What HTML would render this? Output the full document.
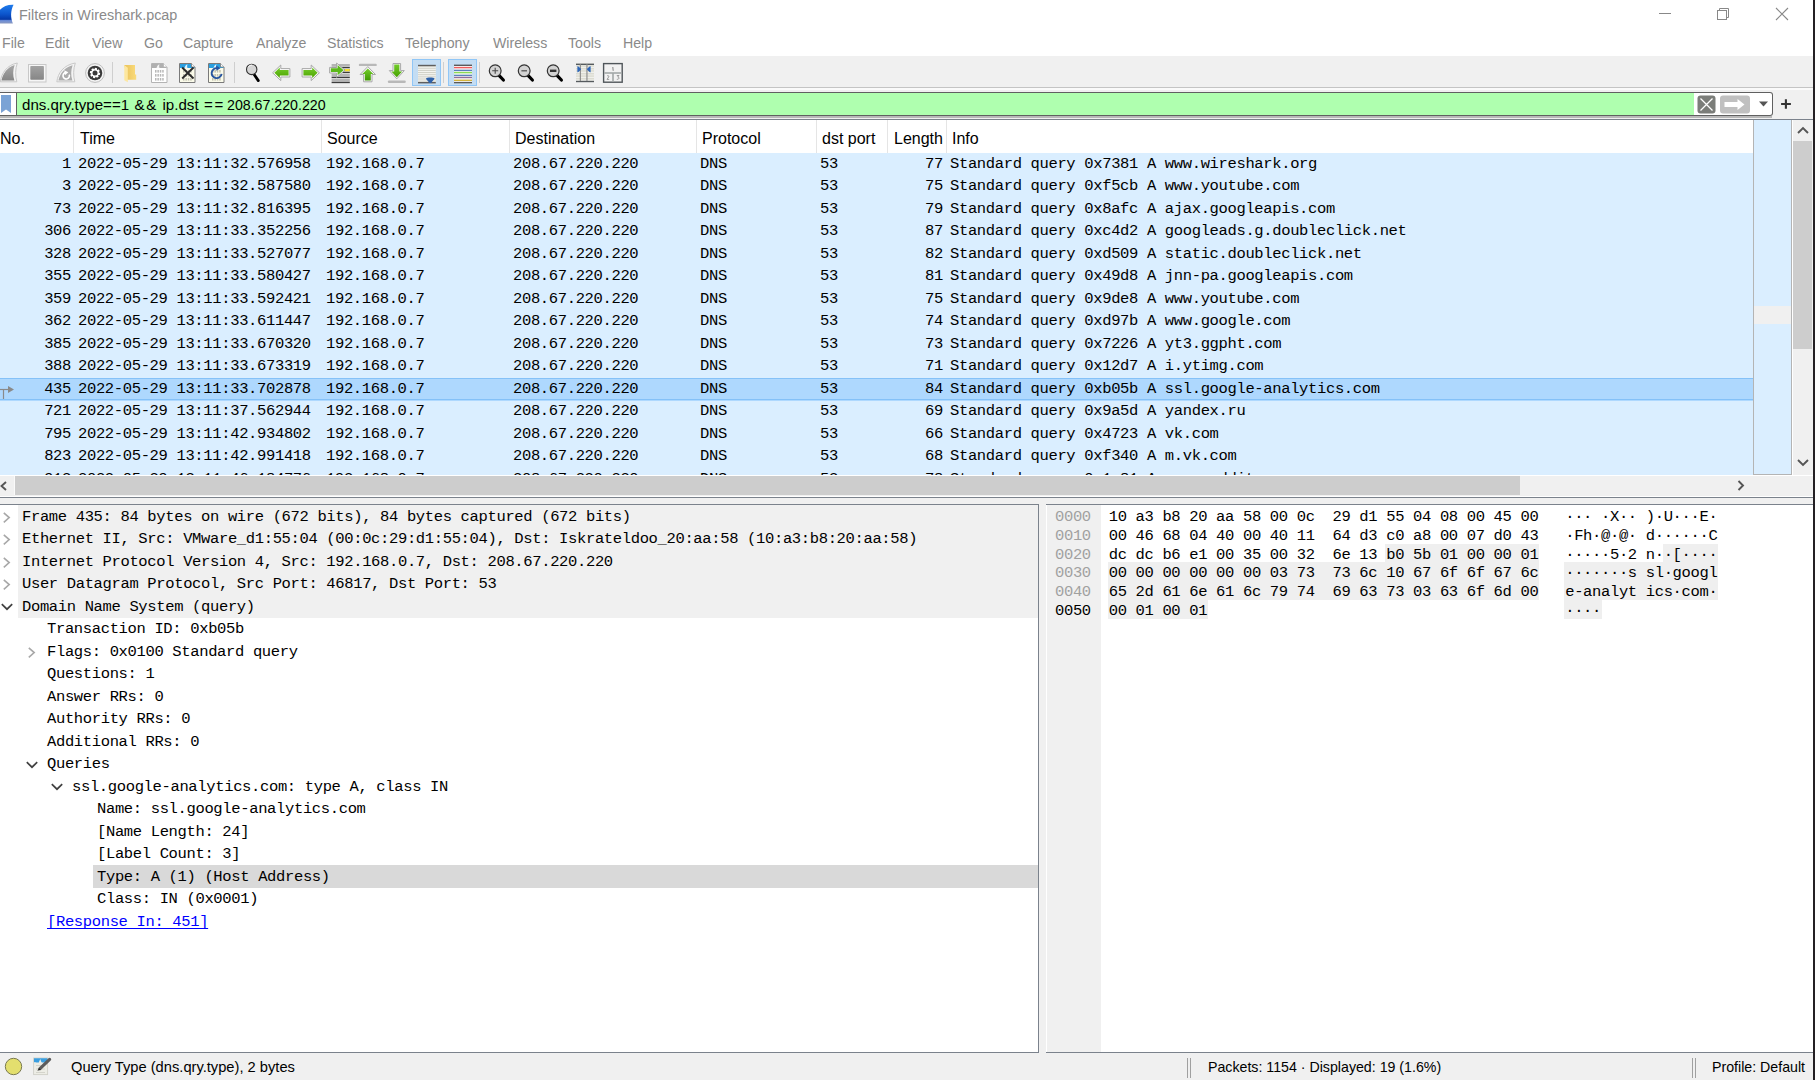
<!DOCTYPE html><html><head><meta charset="utf-8"><style>
*{margin:0;padding:0;box-sizing:border-box}
html,body{width:1815px;height:1080px;overflow:hidden;background:#fff;position:relative;font-family:"Liberation Sans",sans-serif}
.a{position:absolute}
.m{font-family:"Liberation Mono",monospace;font-size:15.5px;letter-spacing:-0.35px;white-space:pre;color:#000;line-height:18px}
.s{font-family:"Liberation Sans",sans-serif;white-space:pre}
</style></head><body>
<div class="a s" style="left:19px;top:6px;font-size:15.4px;color:#8a8a8a;line-height:18px;transform:scaleX(0.935);transform-origin:0 0">Filters in Wireshark.pcap</div>
<svg class="a" style="left:0;top:0" width="16" height="26" viewBox="0 0 16 26"><defs><linearGradient id="lg1" x1="0" y1="0" x2="0" y2="1"><stop offset="0" stop-color="#1f7cec"/><stop offset="0.5" stop-color="#0c55cc"/><stop offset="0.78" stop-color="#0538a6"/><stop offset="0.85" stop-color="#6f90d8"/><stop offset="1" stop-color="#8797c0"/></linearGradient></defs><path d="M0 23.4 H12.9 C10.5 18 10.3 11 13.6 4.8 C8 4.5 3 6.5 0 9.8 Z" fill="url(#lg1)"/></svg>
<div class="a" style="left:1659px;top:13px;width:12px;height:1px;background:#888"></div>
<svg class="a" style="left:1716px;top:7px" width="14" height="14" viewBox="0 0 14 14"><rect x="1.5" y="3.5" width="9" height="9" fill="none" stroke="#888"/><path d="M3.5 3.5 V1.5 H12.5 V10.5 H10.5" fill="none" stroke="#888"/></svg>
<svg class="a" style="left:1775px;top:7px" width="14" height="14" viewBox="0 0 14 14"><path d="M1 1 L13 13 M13 1 L1 13" stroke="#888" stroke-width="1.1"/></svg>
<div class="a s" style="left:2px;top:34px;font-size:15.4px;color:#8a8a8a;line-height:18px;transform:scaleX(0.92);transform-origin:0 0">File</div>
<div class="a s" style="left:45px;top:34px;font-size:15.4px;color:#8a8a8a;line-height:18px;transform:scaleX(0.92);transform-origin:0 0">Edit</div>
<div class="a s" style="left:91.5px;top:34px;font-size:15.4px;color:#8a8a8a;line-height:18px;transform:scaleX(0.92);transform-origin:0 0">View</div>
<div class="a s" style="left:143.5px;top:34px;font-size:15.4px;color:#8a8a8a;line-height:18px;transform:scaleX(0.92);transform-origin:0 0">Go</div>
<div class="a s" style="left:183px;top:34px;font-size:15.4px;color:#8a8a8a;line-height:18px;transform:scaleX(0.92);transform-origin:0 0">Capture</div>
<div class="a s" style="left:256px;top:34px;font-size:15.4px;color:#8a8a8a;line-height:18px;transform:scaleX(0.92);transform-origin:0 0">Analyze</div>
<div class="a s" style="left:327px;top:34px;font-size:15.4px;color:#8a8a8a;line-height:18px;transform:scaleX(0.92);transform-origin:0 0">Statistics</div>
<div class="a s" style="left:404.5px;top:34px;font-size:15.4px;color:#8a8a8a;line-height:18px;transform:scaleX(0.92);transform-origin:0 0">Telephony</div>
<div class="a s" style="left:492.5px;top:34px;font-size:15.4px;color:#8a8a8a;line-height:18px;transform:scaleX(0.92);transform-origin:0 0">Wireless</div>
<div class="a s" style="left:568px;top:34px;font-size:15.4px;color:#8a8a8a;line-height:18px;transform:scaleX(0.92);transform-origin:0 0">Tools</div>
<div class="a s" style="left:622.7px;top:34px;font-size:15.4px;color:#8a8a8a;line-height:18px;transform:scaleX(0.92);transform-origin:0 0">Help</div>
<div class="a" style="left:0;top:56px;width:1813px;height:31px;background:#f0f0f0"></div>
<div class="a" style="left:0;top:87px;width:1813px;height:1px;background:#c4c4c4"></div>
<div class="a" style="left:0;top:88px;width:1813px;height:2px;background:#fafafa"></div>
<div class="a" style="left:0;top:90px;width:1813px;height:29px;background:#f0f0f0"></div>
<div class="a" style="left:112px;top:62px;width:1px;height:21px;background:#cfcfcf"></div>
<div class="a" style="left:234px;top:62px;width:1px;height:21px;background:#cfcfcf"></div>
<div class="a" style="left:443px;top:62px;width:1px;height:21px;background:#cfcfcf"></div>
<div class="a" style="left:479px;top:62px;width:1px;height:21px;background:#cfcfcf"></div>
<svg class="a" style="left:0px;top:62px" width="19" height="21" viewBox="0 0 19 21"><defs><linearGradient id="gf" x1="0" y1="0" x2="0" y2="1"><stop offset="0" stop-color="#a8a8a8"/><stop offset="1" stop-color="#858585"/></linearGradient></defs><path d="M0.3 19.8 C1.5 11 7 3 17.3 1 C15.2 7 15.2 14 16.8 19.8 Z" fill="#f4f4f4" stroke="#c8c8c8" stroke-width="1"/><path d="M1.5 18.4 C3 11.5 7.5 5 14.6 3 C12.8 8.5 12.8 13.5 14.4 18.4 Z" fill="url(#gf)"/></svg>
<svg class="a" style="left:28px;top:64px" width="19" height="19" viewBox="0 0 19 19"><defs><linearGradient id="gs" x1="0" y1="0" x2="0" y2="1"><stop offset="0" stop-color="#a2a2a2"/><stop offset="1" stop-color="#868686"/></linearGradient></defs><rect x="0.5" y="0.5" width="17.5" height="17.5" fill="#f6f6f6" stroke="#c8c8c8"/><rect x="2.3" y="2" width="13.6" height="13.8" rx="0.8" fill="url(#gs)"/></svg>
<svg class="a" style="left:56px;top:62px" width="20" height="21" viewBox="0 0 20 21"><path d="M0.8 19.8 C2 11 7.5 3 19.3 1 C17.2 7 17.2 14 18.8 19.8 Z" fill="#f4f4f4" stroke="#c8c8c8" stroke-width="1"/><path d="M2.4 18.5 C4 11.5 8.8 5 16.6 3.2 C14.8 8.5 14.8 13.5 16.4 18.5 Z" fill="#acacac"/><path d="M13.2 12.6 A3.2 3.2 0 1 1 9.6 10.6" fill="none" stroke="#fff" stroke-width="1.6"/><path d="M8.3 8.2 L12.3 10.2 L9 13.2 Z" fill="#fff"/></svg>
<svg class="a" style="left:85px;top:63px" width="20" height="20" viewBox="0 0 20 20"><circle cx="10" cy="10" r="9.4" fill="#f4f4f4" stroke="#bdbdbd" stroke-width="1"/><circle cx="10" cy="10" r="7.3" fill="#3a3a3a"/><polygon points="13.86,9.46 15.20,10.00 14.79,12.02 13.35,12.01 13.12,12.35 13.68,13.68 11.95,14.82 10.95,13.78 10.54,13.86 10.00,15.20 7.98,14.79 7.99,13.35 7.65,13.12 6.32,13.68 5.18,11.95 6.22,10.95 6.14,10.54 4.80,10.00 5.21,7.98 6.65,7.99 6.88,7.65 6.32,6.32 8.05,5.18 9.05,6.22 9.46,6.14 10.00,4.80 12.02,5.21 12.01,6.65 12.35,6.88 13.68,6.32 14.82,8.05 13.78,9.05" fill="#fff"/><circle cx="10" cy="10" r="2.5" fill="#3a3a3a"/></svg>
<svg class="a" style="left:123px;top:64px" width="15" height="20" viewBox="0 0 15 20"><defs><linearGradient id="gfo" x1="0" y1="0" x2="1" y2="0"><stop offset="0" stop-color="#e9c25a"/><stop offset="1" stop-color="#fadb7c"/></linearGradient></defs><path d="M1.3 1 H12 V10.5 H13.2 V15.8 H4 Z" fill="url(#gfo)"/><path d="M1.3 1 L4.8 3.8 V18.2 L1.3 16.2 Z" fill="#fde79f"/></svg>
<svg class="a" style="left:151px;top:63px" width="17" height="21" viewBox="0 0 17 21"><path d="M0.5 0.5 H12.5 L16 4 V19.5 H0.5 Z" fill="#ffffff" stroke="#b4b4b4"/><path d="M1 1 H12.3 L15.5 4.3 V5 H1 Z" fill="#b0b0b0"/><path d="M5.5 5 C6 3 7 1.8 8.5 1.2 C8 2.5 8 3.8 8.6 5 Z" fill="#fff" opacity="0.85"/><path d="M12.5 0.5 V4 H16" fill="#fff" stroke="#b4b4b4" stroke-width="0.8"/><rect x="4.0" y="7" width="1.5" height="2.6" fill="#b8b8b8"/><rect x="6.4" y="7" width="1.5" height="2.6" fill="#b8b8b8"/><rect x="8.8" y="7" width="1.5" height="2.6" fill="#b8b8b8"/><rect x="11.2" y="7" width="1.5" height="2.6" fill="#b8b8b8"/><rect x="4.0" y="11" width="1.5" height="2.6" fill="#b8b8b8"/><rect x="6.4" y="11" width="1.5" height="2.6" fill="#b8b8b8"/><rect x="8.8" y="11" width="1.5" height="2.6" fill="#b8b8b8"/><rect x="11.2" y="11" width="1.5" height="2.6" fill="#b8b8b8"/><rect x="4.0" y="15" width="1.5" height="2.6" fill="#b8b8b8"/><rect x="6.4" y="15" width="1.5" height="2.6" fill="#b8b8b8"/><rect x="8.8" y="15" width="1.5" height="2.6" fill="#b8b8b8"/><rect x="11.2" y="15" width="1.5" height="2.6" fill="#b8b8b8"/></svg>
<svg class="a" style="left:179px;top:63px" width="17" height="21" viewBox="0 0 17 21"><path d="M0.5 0.5 H12.5 L16 4 V19.5 H0.5 Z" fill="#fbfbea" stroke="#7a7a7a"/><path d="M1 1 H12.3 L15.5 4.3 V5 H1 Z" fill="#2a9fe0"/><path d="M5.5 5 C6 3 7 1.8 8.5 1.2 C8 2.5 8 3.8 8.6 5 Z" fill="#fff" opacity="0.85"/><path d="M12.5 0.5 V4 H16" fill="#fff" stroke="#7a7a7a" stroke-width="0.8"/><rect x="4.0" y="7" width="1.5" height="2.6" fill="#c0c0b0"/><rect x="6.4" y="7" width="1.5" height="2.6" fill="#c0c0b0"/><rect x="8.8" y="7" width="1.5" height="2.6" fill="#c0c0b0"/><rect x="11.2" y="7" width="1.5" height="2.6" fill="#c0c0b0"/><rect x="4.0" y="11" width="1.5" height="2.6" fill="#c0c0b0"/><rect x="6.4" y="11" width="1.5" height="2.6" fill="#c0c0b0"/><rect x="8.8" y="11" width="1.5" height="2.6" fill="#c0c0b0"/><rect x="11.2" y="11" width="1.5" height="2.6" fill="#c0c0b0"/><rect x="4.0" y="15" width="1.5" height="2.6" fill="#c0c0b0"/><rect x="6.4" y="15" width="1.5" height="2.6" fill="#c0c0b0"/><rect x="8.8" y="15" width="1.5" height="2.6" fill="#c0c0b0"/><rect x="11.2" y="15" width="1.5" height="2.6" fill="#c0c0b0"/><path d="M3.2 4.5 L14.5 15.5 M14.5 4.5 L3.2 15.5" stroke="#2b2b2b" stroke-width="1.9"/></svg>
<svg class="a" style="left:208px;top:63px" width="17" height="21" viewBox="0 0 17 21"><path d="M0.5 0.5 H12.5 L16 4 V19.5 H0.5 Z" fill="#fbfbea" stroke="#7a7a7a"/><path d="M1 1 H12.3 L15.5 4.3 V5 H1 Z" fill="#2a9fe0"/><path d="M5.5 5 C6 3 7 1.8 8.5 1.2 C8 2.5 8 3.8 8.6 5 Z" fill="#fff" opacity="0.85"/><path d="M12.5 0.5 V4 H16" fill="#fff" stroke="#7a7a7a" stroke-width="0.8"/><rect x="4.0" y="7" width="1.5" height="2.6" fill="#c0c0b0"/><rect x="6.4" y="7" width="1.5" height="2.6" fill="#c0c0b0"/><rect x="8.8" y="7" width="1.5" height="2.6" fill="#c0c0b0"/><rect x="11.2" y="7" width="1.5" height="2.6" fill="#c0c0b0"/><rect x="4.0" y="11" width="1.5" height="2.6" fill="#c0c0b0"/><rect x="6.4" y="11" width="1.5" height="2.6" fill="#c0c0b0"/><rect x="8.8" y="11" width="1.5" height="2.6" fill="#c0c0b0"/><rect x="11.2" y="11" width="1.5" height="2.6" fill="#c0c0b0"/><rect x="4.0" y="15" width="1.5" height="2.6" fill="#c0c0b0"/><rect x="6.4" y="15" width="1.5" height="2.6" fill="#c0c0b0"/><rect x="8.8" y="15" width="1.5" height="2.6" fill="#c0c0b0"/><rect x="11.2" y="15" width="1.5" height="2.6" fill="#c0c0b0"/><path d="M13.6 10.8 A5 5 0 1 1 9.3 5.2" fill="none" stroke="#2755a0" stroke-width="1.9"/><path d="M8.2 2.6 L12.4 5.2 L8.4 7.8 Z" fill="#2755a0"/></svg>
<svg class="a" style="left:245px;top:63px" width="17" height="21" viewBox="0 0 17 21"><path d="M9.3 11.8 L13.3 17.6" stroke="#000" stroke-width="2.8" stroke-linecap="round"/><circle cx="6.7" cy="6.4" r="5.2" fill="#d6d6d6" stroke="#333" stroke-width="1.1"/><path d="M3.2 4.2 C4 2.6 5.6 1.9 7.2 2" fill="none" stroke="#fff" stroke-width="0.9"/></svg>
<svg class="a" style="left:272px;top:64px" width="19" height="18" viewBox="0 0 19 18"><defs><linearGradient id="ga" x1="0" y1="0" x2="0" y2="1"><stop offset="0" stop-color="#74cc2c"/><stop offset="1" stop-color="#4da300"/></linearGradient></defs><g ><path d="M0.6 8.8 L8.8 1 V4.6 H17.9 V13 H8.8 V16.6 Z" fill="#fafafa" stroke="#a8a8a8" stroke-width="1"/><path d="M2.4 8.8 L7.8 3.6 V6 H16.6 V11.6 H7.8 V14 Z" fill="url(#ga)"/></g></svg>
<svg class="a" style="left:301px;top:64px" width="19" height="18" viewBox="0 0 19 18"><defs><linearGradient id="ga" x1="0" y1="0" x2="0" y2="1"><stop offset="0" stop-color="#74cc2c"/><stop offset="1" stop-color="#4da300"/></linearGradient></defs><g transform="translate(19,0) scale(-1,1)"><path d="M0.6 8.8 L8.8 1 V4.6 H17.9 V13 H8.8 V16.6 Z" fill="#fafafa" stroke="#a8a8a8" stroke-width="1"/><path d="M2.4 8.8 L7.8 3.6 V6 H16.6 V11.6 H7.8 V14 Z" fill="url(#ga)"/></g></svg>
<svg class="a" style="left:326px;top:62px" width="24" height="22" viewBox="0 0 24 22"><rect x="5.6" y="2.25" width="18.2" height="1.5" fill="#a0a0a0"/><rect x="5.6" y="4.75" width="18.2" height="1.5" fill="#3c3c3c"/><rect x="5.6" y="7.25" width="18.2" height="1.5" fill="#3c3c3c"/><rect x="5.6" y="9.65" width="18.2" height="1.5" fill="#3c3c3c"/><rect x="5.6" y="12.25" width="18.2" height="1.5" fill="#a0a0a0"/><rect x="5.6" y="14.65" width="18.2" height="1.5" fill="#3c3c3c"/><rect x="5.6" y="17.25" width="18.2" height="1.5" fill="#a0a0a0"/><rect x="5.6" y="19.65" width="18.2" height="1.5" fill="#3c3c3c"/><rect x="18.5" y="7" width="5.3" height="2.2" fill="#f8e030"/><path d="M3.6 5.4 H10.6 V1 L19 8.2 L10.6 15.4 V11 H3.6 Z" fill="#fafafa" stroke="#a0a0a0" stroke-width="0.9"/><path d="M4.8 6.3 H11.6 V3.1 L17.6 8.2 L11.6 13.3 V10.1 H4.8 Z" fill="#5cb81a"/></svg>
<svg class="a" style="left:358px;top:63px" width="20" height="21" viewBox="0 0 20 21"><defs><linearGradient id="gu" x1="0" y1="0" x2="0" y2="1"><stop offset="0" stop-color="#76cf2e"/><stop offset="1" stop-color="#3f9800"/></linearGradient></defs><rect x="0.8" y="0.7" width="18" height="2.4" rx="1.2" fill="#b8b8b8"/><path d="M9.8 3.6 L17.5 11.5 H14 V18.8 H5.6 V11.5 H2.1 Z" fill="#fafafa" stroke="#a8a8a8" stroke-width="1"/><path d="M9.8 5.5 L15.3 10.9 H12.8 V17.6 H6.8 V10.9 H4.3 Z" fill="url(#gu)"/></svg>
<svg class="a" style="left:387px;top:63px" width="20" height="21" viewBox="0 0 20 21"><defs><linearGradient id="gd" x1="0" y1="0" x2="0" y2="1"><stop offset="0" stop-color="#72cc2a"/><stop offset="1" stop-color="#46a000"/></linearGradient></defs><rect x="0.8" y="17.4" width="18" height="2.6" rx="1.3" fill="#b8b8b8"/><path d="M6 0.5 H13.6 V7.6 H17.3 L9.8 15.8 L2.3 7.6 H6 Z" fill="#fafafa" stroke="#a8a8a8" stroke-width="1"/><path d="M7.2 1.6 H12.4 V8.6 H15.2 L9.8 14.3 L4.4 8.6 H7.2 Z" fill="url(#gd)"/></svg>
<svg class="a" style="left:411px;top:58px" width="31" height="29" viewBox="0 0 31 29"><rect x="1.5" y="1.5" width="28" height="26" fill="#c4ddf3" stroke="#90c6f6" stroke-width="1"/><rect x="7" y="7" width="17.8" height="18" fill="#f4f4f0"/><rect x="7" y="7.60" width="17.8" height="1" fill="#d0d0c6"/><rect x="7" y="9.75" width="17.8" height="1" fill="#d0d0c6"/><rect x="7" y="11.90" width="17.8" height="1" fill="#d0d0c6"/><rect x="7" y="14.05" width="17.8" height="1" fill="#d0d0c6"/><rect x="7" y="16.20" width="17.8" height="1" fill="#d0d0c6"/><rect x="7" y="18.35" width="17.8" height="1" fill="#d0d0c6"/><rect x="7" y="20.50" width="17.8" height="1" fill="#d0d0c6"/><rect x="7" y="22.65" width="17.8" height="1" fill="#d0d0c6"/><rect x="7" y="6.8" width="17.8" height="1.4" fill="#5e5e5e"/><rect x="7" y="24" width="17.8" height="1.4" fill="#5e5e5e"/><path d="M15 20.4 C15.8 19.2 22.8 19.2 23.5 20.4 C23.5 22 20.8 22.8 20.4 25 H18.1 C17.7 22.8 15 22 15 20.4 Z" fill="#2f62aa"/></svg>
<svg class="a" style="left:447px;top:58px" width="31" height="29" viewBox="0 0 31 29"><rect x="1.5" y="1.5" width="28" height="26" fill="#c4ddf3" stroke="#90c6f6" stroke-width="1"/><rect x="7" y="7" width="18" height="18" fill="#fafafa"/><rect x="7" y="6.60" width="18" height="1.4" fill="#5a5a5a"/><rect x="7" y="8.90" width="18" height="1.4" fill="#ef5d5d"/><rect x="7" y="11.70" width="18" height="1.4" fill="#5a82bb"/><rect x="7" y="13.90" width="18" height="1.4" fill="#8bdb55"/><rect x="7" y="16.70" width="18" height="1.4" fill="#5a82bb"/><rect x="7" y="18.80" width="18" height="1.4" fill="#916f9c"/><rect x="7" y="21.60" width="18" height="1.4" fill="#d4b43c"/><rect x="7" y="23.90" width="18" height="1.4" fill="#5a5a5a"/></svg>
<svg class="a" style="left:488px;top:63px" width="20" height="21" viewBox="0 0 20 21"><path d="M10.5 11.8 L15.4 17" stroke="#000" stroke-width="3.2" stroke-linecap="round"/><circle cx="7.2" cy="7.8" r="5.9" fill="#d3d3d3" stroke="#333" stroke-width="1.2"/><path d="M7.2 4.8 V10.8 M4.2 7.8 H10.2" stroke="#4a4a4a" stroke-width="1.1"/></svg>
<svg class="a" style="left:517px;top:63px" width="20" height="21" viewBox="0 0 20 21"><path d="M10.5 11.8 L15.4 17" stroke="#000" stroke-width="3.2" stroke-linecap="round"/><circle cx="7.2" cy="7.8" r="5.9" fill="#d3d3d3" stroke="#333" stroke-width="1.2"/><path d="M4.4 7.8 H10" stroke="#555" stroke-width="1.3"/></svg>
<svg class="a" style="left:546px;top:63px" width="20" height="21" viewBox="0 0 20 21"><path d="M10.5 11.8 L15.4 17" stroke="#000" stroke-width="3.2" stroke-linecap="round"/><circle cx="7.2" cy="7.8" r="5.9" fill="#d3d3d3" stroke="#333" stroke-width="1.2"/><path d="M4 7.8 H10.4" stroke="#333" stroke-width="2.4"/></svg>
<svg class="a" style="left:576px;top:63px" width="18" height="20" viewBox="0 0 18 20"><rect x="0" y="0" width="18" height="18" fill="#f0f0ec"/><rect x="0" y="2.6" width="18" height="0.9" fill="#cfcfc0"/><rect x="0" y="5.4" width="18" height="0.9" fill="#cfcfc0"/><rect x="0" y="7.5" width="18" height="0.9" fill="#cfcfc0"/><rect x="0" y="10.4" width="18" height="0.9" fill="#cfcfc0"/><rect x="0" y="12.6" width="18" height="0.9" fill="#cfcfc0"/><rect x="0" y="15.4" width="18" height="0.9" fill="#cfcfc0"/><rect x="0" y="0.6" width="18" height="1.4" fill="#555a5e"/><rect x="0" y="17.8" width="18" height="1.4" fill="#555a5e"/><rect x="3.8" y="1" width="1.1" height="17" fill="#888"/><rect x="10.4" y="1" width="1.1" height="17" fill="#888"/><path d="M1.4 3.2 C2.4 3.2 5 5.4 5 6.2 C5 7 2.4 9.2 1.4 9.2 Z" fill="#2e66b8"/><path d="M14.6 3.2 C13.6 3.2 11 5.4 11 6.2 C11 7 13.6 9.2 14.6 9.2 Z" fill="#2e66b8"/></svg>
<svg class="a" style="left:602px;top:62px" width="22" height="22" viewBox="0 0 22 22"><rect x="1.6" y="1.6" width="18.6" height="18.6" fill="#f2f2f2" stroke="#50565a" stroke-width="1.4"/><rect x="2.2" y="10.2" width="17.4" height="1.6" fill="#a4a8a8"/><rect x="10.2" y="11" width="1.6" height="9" fill="#a4a8a8"/><path d="M10.8 5 L11.2 8.8" stroke="#777" stroke-width="0.9"/><path d="M5 14.2 C5.5 13.2 7.2 13.4 6.8 14.8 L5 17.4 H7.2" fill="none" stroke="#888" stroke-width="0.8"/><path d="M14.8 13.5 H17 L15.7 15 C17.6 15 17.6 17.6 14.8 17.3" fill="none" stroke="#888" stroke-width="0.8"/></svg>
<div class="a" style="left:0;top:92px;width:1773px;height:24px;border:1px solid #606060;border-left:none;border-radius:0 3px 3px 0;background:#fff"></div>
<div class="a" style="left:16px;top:92px;width:1px;height:24px;background:#606060"></div>
<div class="a" style="left:17px;top:93px;width:1677px;height:22px;background:#afffaf"></div>
<div class="a" style="left:0;top:116px;width:1772px;height:2px;background:#b8b8b8"></div>
<svg class="a" style="left:1px;top:95px" width="10" height="19" viewBox="0 0 10 19"><path d="M0 0 H10 V18 L5 14.6 L0 18 Z" fill="#7ba3d5"/></svg>
<div class="a s" style="left:22px;top:96px;font-size:15.1px;color:#000;line-height:18px;">dns.qry.type==1</div>
<div class="a s" style="left:134.5px;top:96px;font-size:15.1px;color:#000;line-height:18px;letter-spacing:1.8px;">&amp;&amp;</div>
<div class="a s" style="left:162.5px;top:96px;font-size:15.1px;color:#000;line-height:18px;">ip.dst</div>
<div class="a s" style="left:204px;top:96px;font-size:15.1px;color:#000;line-height:18px;letter-spacing:1.6px;">==</div>
<div class="a s" style="left:226.5px;top:96px;font-size:15.1px;color:#000;line-height:18px;transform:scaleX(0.94);transform-origin:0 0;">208.67.220.220</div>
<svg class="a" style="left:1697px;top:95px" width="20" height="19" viewBox="0 0 20 19"><rect x="0.5" y="0.5" width="18" height="18" rx="3" fill="#7b7d79"/><path d="M3.5 3.5 L15.5 15.5 M15.5 3.5 L3.5 15.5" stroke="#fff" stroke-width="1.3"/></svg>
<svg class="a" style="left:1720px;top:95px" width="31" height="19" viewBox="0 0 31 19"><rect x="0" y="0.5" width="30" height="18" rx="3" fill="#c0c0c0"/><path d="M4.5 7 H17.5 V4 L24.5 9.5 L17.5 15 V12 H4.5 Z" fill="#fff"/></svg>
<svg class="a" style="left:1759px;top:101px" width="9" height="6" viewBox="0 0 9 6"><path d="M0 0.5 H9 L4.5 5.5 Z" fill="#555"/></svg>
<svg class="a" style="left:1780px;top:98px" width="12" height="12" viewBox="0 0 12 12"><path d="M5.9 1.3 V10.7 M1.1 6 H10.9" stroke="#333" stroke-width="2.1"/></svg>
<div class="a" style="left:0;top:119px;width:1813px;height:1px;background:#7b828c"></div>
<div class="a" style="left:0;top:120px;width:1753px;height:33px;background:#fff"></div>
<div class="a" style="left:73px;top:120px;width:1px;height:33px;background:#e5e5e5"></div>
<div class="a" style="left:321px;top:120px;width:1px;height:33px;background:#e5e5e5"></div>
<div class="a" style="left:509px;top:120px;width:1px;height:33px;background:#e5e5e5"></div>
<div class="a" style="left:696px;top:120px;width:1px;height:33px;background:#e5e5e5"></div>
<div class="a" style="left:816px;top:120px;width:1px;height:33px;background:#e5e5e5"></div>
<div class="a" style="left:887px;top:120px;width:1px;height:33px;background:#e5e5e5"></div>
<div class="a" style="left:946px;top:120px;width:1px;height:33px;background:#e5e5e5"></div>
<div class="a s" style="left:0px;top:130px;font-size:16px;color:#000;line-height:18px">No.</div>
<div class="a s" style="left:80px;top:130px;font-size:16px;color:#000;line-height:18px">Time</div>
<div class="a s" style="left:327px;top:130px;font-size:16px;color:#000;line-height:18px">Source</div>
<div class="a s" style="left:515px;top:130px;font-size:16px;color:#000;line-height:18px">Destination</div>
<div class="a s" style="left:702px;top:130px;font-size:16px;color:#000;line-height:18px">Protocol</div>
<div class="a s" style="left:822px;top:130px;font-size:16px;color:#000;line-height:18px">dst port</div>
<div class="a s" style="left:894px;top:130px;font-size:16px;color:#000;line-height:18px">Length</div>
<div class="a s" style="left:952px;top:130px;font-size:16px;color:#000;line-height:18px">Info</div>
<div class="a" style="left:0;top:153px;width:1753px;height:322px;overflow:hidden">
<div class="a" style="left:0;top:0.0px;width:1753px;height:22.5px;background:#daeeff"></div>
<div class="a m" style="right:1682px;top:1.5px">1</div>
<div class="a m" style="left:78px;top:1.5px">2022-05-29 13:11:32.576958</div>
<div class="a m" style="left:326px;top:1.5px">192.168.0.7</div>
<div class="a m" style="left:513px;top:1.5px">208.67.220.220</div>
<div class="a m" style="left:700px;top:1.5px">DNS</div>
<div class="a m" style="left:820px;top:1.5px">53</div>
<div class="a m" style="right:810px;top:1.5px">77</div>
<div class="a m" style="left:950px;top:1.5px">Standard query 0x7381 A www.wireshark.org</div>
<div class="a" style="left:0;top:22.5px;width:1753px;height:22.5px;background:#daeeff"></div>
<div class="a m" style="right:1682px;top:24.0px">3</div>
<div class="a m" style="left:78px;top:24.0px">2022-05-29 13:11:32.587580</div>
<div class="a m" style="left:326px;top:24.0px">192.168.0.7</div>
<div class="a m" style="left:513px;top:24.0px">208.67.220.220</div>
<div class="a m" style="left:700px;top:24.0px">DNS</div>
<div class="a m" style="left:820px;top:24.0px">53</div>
<div class="a m" style="right:810px;top:24.0px">75</div>
<div class="a m" style="left:950px;top:24.0px">Standard query 0xf5cb A www.youtube.com</div>
<div class="a" style="left:0;top:45.0px;width:1753px;height:22.5px;background:#daeeff"></div>
<div class="a m" style="right:1682px;top:46.5px">73</div>
<div class="a m" style="left:78px;top:46.5px">2022-05-29 13:11:32.816395</div>
<div class="a m" style="left:326px;top:46.5px">192.168.0.7</div>
<div class="a m" style="left:513px;top:46.5px">208.67.220.220</div>
<div class="a m" style="left:700px;top:46.5px">DNS</div>
<div class="a m" style="left:820px;top:46.5px">53</div>
<div class="a m" style="right:810px;top:46.5px">79</div>
<div class="a m" style="left:950px;top:46.5px">Standard query 0x8afc A ajax.googleapis.com</div>
<div class="a" style="left:0;top:67.5px;width:1753px;height:22.5px;background:#daeeff"></div>
<div class="a m" style="right:1682px;top:69.0px">306</div>
<div class="a m" style="left:78px;top:69.0px">2022-05-29 13:11:33.352256</div>
<div class="a m" style="left:326px;top:69.0px">192.168.0.7</div>
<div class="a m" style="left:513px;top:69.0px">208.67.220.220</div>
<div class="a m" style="left:700px;top:69.0px">DNS</div>
<div class="a m" style="left:820px;top:69.0px">53</div>
<div class="a m" style="right:810px;top:69.0px">87</div>
<div class="a m" style="left:950px;top:69.0px">Standard query 0xc4d2 A googleads.g.doubleclick.net</div>
<div class="a" style="left:0;top:90.0px;width:1753px;height:22.5px;background:#daeeff"></div>
<div class="a m" style="right:1682px;top:91.5px">328</div>
<div class="a m" style="left:78px;top:91.5px">2022-05-29 13:11:33.527077</div>
<div class="a m" style="left:326px;top:91.5px">192.168.0.7</div>
<div class="a m" style="left:513px;top:91.5px">208.67.220.220</div>
<div class="a m" style="left:700px;top:91.5px">DNS</div>
<div class="a m" style="left:820px;top:91.5px">53</div>
<div class="a m" style="right:810px;top:91.5px">82</div>
<div class="a m" style="left:950px;top:91.5px">Standard query 0xd509 A static.doubleclick.net</div>
<div class="a" style="left:0;top:112.5px;width:1753px;height:22.5px;background:#daeeff"></div>
<div class="a m" style="right:1682px;top:114.0px">355</div>
<div class="a m" style="left:78px;top:114.0px">2022-05-29 13:11:33.580427</div>
<div class="a m" style="left:326px;top:114.0px">192.168.0.7</div>
<div class="a m" style="left:513px;top:114.0px">208.67.220.220</div>
<div class="a m" style="left:700px;top:114.0px">DNS</div>
<div class="a m" style="left:820px;top:114.0px">53</div>
<div class="a m" style="right:810px;top:114.0px">81</div>
<div class="a m" style="left:950px;top:114.0px">Standard query 0x49d8 A jnn-pa.googleapis.com</div>
<div class="a" style="left:0;top:135.0px;width:1753px;height:22.5px;background:#daeeff"></div>
<div class="a m" style="right:1682px;top:136.5px">359</div>
<div class="a m" style="left:78px;top:136.5px">2022-05-29 13:11:33.592421</div>
<div class="a m" style="left:326px;top:136.5px">192.168.0.7</div>
<div class="a m" style="left:513px;top:136.5px">208.67.220.220</div>
<div class="a m" style="left:700px;top:136.5px">DNS</div>
<div class="a m" style="left:820px;top:136.5px">53</div>
<div class="a m" style="right:810px;top:136.5px">75</div>
<div class="a m" style="left:950px;top:136.5px">Standard query 0x9de8 A www.youtube.com</div>
<div class="a" style="left:0;top:157.5px;width:1753px;height:22.5px;background:#daeeff"></div>
<div class="a m" style="right:1682px;top:159.0px">362</div>
<div class="a m" style="left:78px;top:159.0px">2022-05-29 13:11:33.611447</div>
<div class="a m" style="left:326px;top:159.0px">192.168.0.7</div>
<div class="a m" style="left:513px;top:159.0px">208.67.220.220</div>
<div class="a m" style="left:700px;top:159.0px">DNS</div>
<div class="a m" style="left:820px;top:159.0px">53</div>
<div class="a m" style="right:810px;top:159.0px">74</div>
<div class="a m" style="left:950px;top:159.0px">Standard query 0xd97b A www.google.com</div>
<div class="a" style="left:0;top:180.0px;width:1753px;height:22.5px;background:#daeeff"></div>
<div class="a m" style="right:1682px;top:181.5px">385</div>
<div class="a m" style="left:78px;top:181.5px">2022-05-29 13:11:33.670320</div>
<div class="a m" style="left:326px;top:181.5px">192.168.0.7</div>
<div class="a m" style="left:513px;top:181.5px">208.67.220.220</div>
<div class="a m" style="left:700px;top:181.5px">DNS</div>
<div class="a m" style="left:820px;top:181.5px">53</div>
<div class="a m" style="right:810px;top:181.5px">73</div>
<div class="a m" style="left:950px;top:181.5px">Standard query 0x7226 A yt3.ggpht.com</div>
<div class="a" style="left:0;top:202.5px;width:1753px;height:22.5px;background:#daeeff"></div>
<div class="a m" style="right:1682px;top:204.0px">388</div>
<div class="a m" style="left:78px;top:204.0px">2022-05-29 13:11:33.673319</div>
<div class="a m" style="left:326px;top:204.0px">192.168.0.7</div>
<div class="a m" style="left:513px;top:204.0px">208.67.220.220</div>
<div class="a m" style="left:700px;top:204.0px">DNS</div>
<div class="a m" style="left:820px;top:204.0px">53</div>
<div class="a m" style="right:810px;top:204.0px">71</div>
<div class="a m" style="left:950px;top:204.0px">Standard query 0x12d7 A i.ytimg.com</div>
<div class="a" style="left:0;top:225.0px;width:1753px;height:22.5px;background:#aed8fe"></div>
<div class="a" style="left:0;top:225.0px;width:1753px;height:1px;background:#84c1f8"></div>
<div class="a" style="left:0;top:246.0px;width:1753px;height:1px;background:#84c1f8"></div>
<div class="a m" style="right:1682px;top:226.5px">435</div>
<div class="a m" style="left:78px;top:226.5px">2022-05-29 13:11:33.702878</div>
<div class="a m" style="left:326px;top:226.5px">192.168.0.7</div>
<div class="a m" style="left:513px;top:226.5px">208.67.220.220</div>
<div class="a m" style="left:700px;top:226.5px">DNS</div>
<div class="a m" style="left:820px;top:226.5px">53</div>
<div class="a m" style="right:810px;top:226.5px">84</div>
<div class="a m" style="left:950px;top:226.5px">Standard query 0xb05b A ssl.google-analytics.com</div>
<div class="a" style="left:0;top:247.5px;width:1753px;height:22.5px;background:#daeeff"></div>
<div class="a m" style="right:1682px;top:249.0px">721</div>
<div class="a m" style="left:78px;top:249.0px">2022-05-29 13:11:37.562944</div>
<div class="a m" style="left:326px;top:249.0px">192.168.0.7</div>
<div class="a m" style="left:513px;top:249.0px">208.67.220.220</div>
<div class="a m" style="left:700px;top:249.0px">DNS</div>
<div class="a m" style="left:820px;top:249.0px">53</div>
<div class="a m" style="right:810px;top:249.0px">69</div>
<div class="a m" style="left:950px;top:249.0px">Standard query 0x9a5d A yandex.ru</div>
<div class="a" style="left:0;top:270.0px;width:1753px;height:22.5px;background:#daeeff"></div>
<div class="a m" style="right:1682px;top:271.5px">795</div>
<div class="a m" style="left:78px;top:271.5px">2022-05-29 13:11:42.934802</div>
<div class="a m" style="left:326px;top:271.5px">192.168.0.7</div>
<div class="a m" style="left:513px;top:271.5px">208.67.220.220</div>
<div class="a m" style="left:700px;top:271.5px">DNS</div>
<div class="a m" style="left:820px;top:271.5px">53</div>
<div class="a m" style="right:810px;top:271.5px">66</div>
<div class="a m" style="left:950px;top:271.5px">Standard query 0x4723 A vk.com</div>
<div class="a" style="left:0;top:292.5px;width:1753px;height:22.5px;background:#daeeff"></div>
<div class="a m" style="right:1682px;top:294.0px">823</div>
<div class="a m" style="left:78px;top:294.0px">2022-05-29 13:11:42.991418</div>
<div class="a m" style="left:326px;top:294.0px">192.168.0.7</div>
<div class="a m" style="left:513px;top:294.0px">208.67.220.220</div>
<div class="a m" style="left:700px;top:294.0px">DNS</div>
<div class="a m" style="left:820px;top:294.0px">53</div>
<div class="a m" style="right:810px;top:294.0px">68</div>
<div class="a m" style="left:950px;top:294.0px">Standard query 0xf340 A m.vk.com</div>
<div class="a" style="left:0;top:315.0px;width:1753px;height:22.5px;background:#daeeff"></div>
<div class="a m" style="right:1682px;top:316.5px">913</div>
<div class="a m" style="left:78px;top:316.5px">2022-05-29 13:11:46.184776</div>
<div class="a m" style="left:326px;top:316.5px">192.168.0.7</div>
<div class="a m" style="left:513px;top:316.5px">208.67.220.220</div>
<div class="a m" style="left:700px;top:316.5px">DNS</div>
<div class="a m" style="left:820px;top:316.5px">53</div>
<div class="a m" style="right:810px;top:316.5px">78</div>
<div class="a m" style="left:950px;top:316.5px">Standard query 0x1c81 A www.reddit.com</div>
</div>
<svg class="a" style="left:0;top:385px" width="16" height="15" viewBox="0 0 16 15"><path d="M0 4.5 H9" stroke="#8a8a8a" stroke-width="1.2"/><path d="M3.5 4.5 V14" stroke="#8a8a8a" stroke-width="1.2"/><path d="M8 1 L14 4.5 L8 8 Z" fill="#8a8a8a"/></svg>
<div class="a" style="left:1753px;top:120px;width:39px;height:355px;background:#b4b4b4"></div>
<div class="a" style="left:1754px;top:120px;width:37px;height:354px;background:#daeeff"></div>
<div class="a" style="left:1754px;top:306px;width:37px;height:18px;background:#f0f0f0"></div>
<div class="a" style="left:1792px;top:120px;width:21px;height:355px;background:#f0f0f0"></div>
<div class="a" style="left:1792px;top:120px;width:1px;height:355px;background:#fff"></div>
<div class="a" style="left:1793px;top:141px;width:19px;height:208px;background:#cdcdcd"></div>
<svg class="a" style="left:1797px;top:126px" width="12" height="8" viewBox="0 0 12 8"><path d="M1 7 L6 2 L11 7" fill="none" stroke="#555" stroke-width="1.9"/></svg>
<svg class="a" style="left:1797px;top:459px" width="12" height="8" viewBox="0 0 12 8"><path d="M1 1 L6 6 L11 1" fill="none" stroke="#555" stroke-width="1.9"/></svg>
<div class="a" style="left:0;top:475px;width:1813px;height:21px;background:#f0f0f0"></div>
<div class="a" style="left:0;top:475px;width:1813px;height:1px;background:#fff"></div>
<div class="a" style="left:15px;top:476px;width:1505px;height:19px;background:#cdcdcd"></div>
<div class="a" style="left:14px;top:476px;width:1px;height:19px;background:#fafafa"></div>
<svg class="a" style="left:0;top:481px" width="8" height="10" viewBox="0 0 8 10"><path d="M6 1 L1.5 5 L6 9" fill="none" stroke="#555" stroke-width="1.9"/></svg>
<svg class="a" style="left:1737px;top:480px" width="8" height="11" viewBox="0 0 8 11"><path d="M1.5 1 L6 5.5 L1.5 10" fill="none" stroke="#555" stroke-width="1.9"/></svg>
<div class="a" style="left:0;top:496px;width:1813px;height:1px;background:#fff"></div>
<div class="a" style="left:0;top:497px;width:1813px;height:1px;background:#7b828c"></div>
<div class="a" style="left:0;top:498px;width:1813px;height:582px;background:#f0f0f0"></div>
<div class="a" style="left:0;top:504px;width:1039px;height:549px;background:#fff;border-top:1px solid #7b828c;border-right:1px solid #7b828c;border-bottom:1px solid #7b828c"></div>
<div class="a" style="left:18px;top:505.0px;width:1020px;height:22.5px;background:#f0f0f0"></div>
<svg class="a" style="left:3px;top:511.5px" width="8" height="12" viewBox="0 0 8 12"><path d="M0.8 0.8 L6.2 5.6 L0.8 10.4" fill="none" stroke="#a8a8a8" stroke-width="1.6"/></svg>
<div class="a m" style="left:22px;top:507.5px;">Frame 435: 84 bytes on wire (672 bits), 84 bytes captured (672 bits)</div>
<div class="a" style="left:18px;top:527.5px;width:1020px;height:22.5px;background:#f0f0f0"></div>
<svg class="a" style="left:3px;top:534.0px" width="8" height="12" viewBox="0 0 8 12"><path d="M0.8 0.8 L6.2 5.6 L0.8 10.4" fill="none" stroke="#a8a8a8" stroke-width="1.6"/></svg>
<div class="a m" style="left:22px;top:530.0px;">Ethernet II, Src: VMware_d1:55:04 (00:0c:29:d1:55:04), Dst: Iskrateldoo_20:aa:58 (10:a3:b8:20:aa:58)</div>
<div class="a" style="left:18px;top:550.0px;width:1020px;height:22.5px;background:#f0f0f0"></div>
<svg class="a" style="left:3px;top:556.5px" width="8" height="12" viewBox="0 0 8 12"><path d="M0.8 0.8 L6.2 5.6 L0.8 10.4" fill="none" stroke="#a8a8a8" stroke-width="1.6"/></svg>
<div class="a m" style="left:22px;top:552.5px;">Internet Protocol Version 4, Src: 192.168.0.7, Dst: 208.67.220.220</div>
<div class="a" style="left:18px;top:572.5px;width:1020px;height:22.5px;background:#f0f0f0"></div>
<svg class="a" style="left:3px;top:579.0px" width="8" height="12" viewBox="0 0 8 12"><path d="M0.8 0.8 L6.2 5.6 L0.8 10.4" fill="none" stroke="#a8a8a8" stroke-width="1.6"/></svg>
<div class="a m" style="left:22px;top:575.0px;">User Datagram Protocol, Src Port: 46817, Dst Port: 53</div>
<div class="a" style="left:18px;top:595.0px;width:1020px;height:22.5px;background:#f0f0f0"></div>
<svg class="a" style="left:1px;top:603.0px" width="12" height="8" viewBox="0 0 12 8"><path d="M0.8 1.2 L6 6.2 L11.2 1.2" fill="none" stroke="#404040" stroke-width="1.7"/></svg>
<div class="a m" style="left:22px;top:597.5px;">Domain Name System (query)</div>
<div class="a m" style="left:47px;top:620.0px;">Transaction ID: 0xb05b</div>
<svg class="a" style="left:28px;top:646.5px" width="8" height="12" viewBox="0 0 8 12"><path d="M0.8 0.8 L6.2 5.6 L0.8 10.4" fill="none" stroke="#a8a8a8" stroke-width="1.6"/></svg>
<div class="a m" style="left:47px;top:642.5px;">Flags: 0x0100 Standard query</div>
<div class="a m" style="left:47px;top:665.0px;">Questions: 1</div>
<div class="a m" style="left:47px;top:687.5px;">Answer RRs: 0</div>
<div class="a m" style="left:47px;top:710.0px;">Authority RRs: 0</div>
<div class="a m" style="left:47px;top:732.5px;">Additional RRs: 0</div>
<svg class="a" style="left:26px;top:760.5px" width="12" height="8" viewBox="0 0 12 8"><path d="M0.8 1.2 L6 6.2 L11.2 1.2" fill="none" stroke="#404040" stroke-width="1.7"/></svg>
<div class="a m" style="left:47px;top:755.0px;">Queries</div>
<svg class="a" style="left:51px;top:783.0px" width="12" height="8" viewBox="0 0 12 8"><path d="M0.8 1.2 L6 6.2 L11.2 1.2" fill="none" stroke="#404040" stroke-width="1.7"/></svg>
<div class="a m" style="left:72px;top:777.5px;">ssl.google-analytics.com: type A, class IN</div>
<div class="a m" style="left:97px;top:800.0px;">Name: ssl.google-analytics.com</div>
<div class="a m" style="left:97px;top:822.5px;">[Name Length: 24]</div>
<div class="a m" style="left:97px;top:845.0px;">[Label Count: 3]</div>
<div class="a" style="left:93px;top:865.0px;width:945px;height:22.5px;background:#d9d9d9"></div>
<div class="a m" style="left:97px;top:867.5px;">Type: A (1) (Host Address)</div>
<div class="a m" style="left:97px;top:890.0px;">Class: IN (0x0001)</div>
<div class="a m" style="left:47px;top:912.5px;color:#0000ff;text-decoration:underline;text-decoration-skip-ink:none;text-underline-offset:2px">[Response In: 451]</div>
<div class="a" style="left:1046px;top:504px;width:767px;height:549px;background:#fff;border-top:1px solid #7b828c;border-bottom:1px solid #7b828c"></div>
<div class="a" style="left:1047px;top:505px;width:54px;height:547px;background:#f0f0f0"></div>
<div class="a m" style="left:1055px;top:508.0px;color:#a0a0a0">0000</div>
<div class="a m" style="left:1108.71px;top:508.0px">10 a3 b8 20 aa 58 00 0c  29 d1 55 04 08 00 45 00</div>
<div class="a m" style="left:1565.21px;top:508.0px">··· ·X·· )·U···E·</div>
<div class="a m" style="left:1055px;top:526.75px;color:#a0a0a0">0010</div>
<div class="a m" style="left:1108.71px;top:526.75px">00 46 68 04 40 00 40 11  64 d3 c0 a8 00 07 d0 43</div>
<div class="a m" style="left:1565.21px;top:526.75px">·Fh·@·@· d······C</div>
<div class="a" style="left:1385.19px;top:543.5px;width:154.17px;height:18.75px;background:#efefef"></div>
<div class="a" style="left:1662.67px;top:543.5px;width:55.71px;height:18.75px;background:#efefef"></div>
<div class="a m" style="left:1055px;top:545.5px;color:#a0a0a0">0020</div>
<div class="a m" style="left:1108.71px;top:545.5px">dc dc b6 e1 00 35 00 32  6e 13 b0 5b 01 00 00 01</div>
<div class="a m" style="left:1565.21px;top:545.5px">·····5·2 n··[····</div>
<div class="a" style="left:1107.71px;top:562.25px;width:431.65px;height:18.75px;background:#efefef"></div>
<div class="a" style="left:1564.21px;top:562.25px;width:154.17px;height:18.75px;background:#efefef"></div>
<div class="a m" style="left:1055px;top:564.25px;color:#a0a0a0">0030</div>
<div class="a m" style="left:1108.71px;top:564.25px">00 00 00 00 00 00 03 73  73 6c 10 67 6f 6f 67 6c</div>
<div class="a m" style="left:1565.21px;top:564.25px">·······s sl·googl</div>
<div class="a" style="left:1107.71px;top:581.0px;width:431.65px;height:18.75px;background:#efefef"></div>
<div class="a" style="left:1564.21px;top:581.0px;width:154.17px;height:18.75px;background:#efefef"></div>
<div class="a m" style="left:1055px;top:583.0px;color:#a0a0a0">0040</div>
<div class="a m" style="left:1108.71px;top:583.0px">65 2d 61 6e 61 6c 79 74  69 63 73 03 63 6f 6d 00</div>
<div class="a m" style="left:1565.21px;top:583.0px">e-analyt ics·com·</div>
<div class="a" style="left:1107.71px;top:599.75px;width:100.46px;height:18.75px;background:#efefef"></div>
<div class="a" style="left:1564.21px;top:599.75px;width:37.80px;height:18.75px;background:#efefef"></div>
<div class="a m" style="left:1055px;top:601.75px;color:#000">0050</div>
<div class="a m" style="left:1108.71px;top:601.75px">00 01 00 01</div>
<div class="a m" style="left:1565.21px;top:601.75px">····</div>
<svg class="a" style="left:4px;top:1057px" width="19" height="19" viewBox="0 0 19 19"><circle cx="9.5" cy="9.5" r="8.2" fill="#e3df6e" stroke="#7a7a50" stroke-width="1"/></svg>
<svg class="a" style="left:33px;top:1057px" width="20" height="20" viewBox="0 0 20 20"><rect x="0.6" y="1" width="14" height="16.6" fill="#ededE6" stroke="#d0d0c8" stroke-width="0.9"/><path d="M1 1.2 H14.4 V5 C13 5.6 10 5.6 8.5 5.2 L7.2 2 L5.8 5.4 C4 5.6 2 5.4 1 5 Z" fill="#3a9ee0"/><path d="M3 8.5 H12 M3 12 H12 M3 15.5 H12" stroke="#d4d4cc" stroke-width="1"/><path d="M7 11.6 L16.6 2.4" stroke="#5c5c5c" stroke-width="3.2" stroke-linecap="round"/><path d="M4.4 13.8 L6 11 L7.8 12.8 Z" fill="#222"/></svg>
<div class="a s" style="left:71px;top:1058px;font-size:14.7px;color:#000;line-height:18px">Query Type (dns.qry.type), 2 bytes</div>
<div class="a" style="left:1187px;top:1058px;width:1px;height:20px;background:#a0a0a0"></div>
<div class="a" style="left:1190px;top:1058px;width:1px;height:20px;background:#a0a0a0"></div>
<div class="a s" style="left:1208px;top:1058px;font-size:14.2px;color:#000;line-height:18px">Packets: 1154 · Displayed: 19 (1.6%)</div>
<div class="a" style="left:1692px;top:1058px;width:1px;height:20px;background:#a0a0a0"></div>
<div class="a" style="left:1695px;top:1058px;width:1px;height:20px;background:#a0a0a0"></div>
<div class="a s" style="left:1712px;top:1058px;font-size:14.2px;color:#000;line-height:18px">Profile: Default</div>
<div class="a" style="left:1813px;top:0;width:2px;height:1080px;background:#242024"></div>
</body></html>
